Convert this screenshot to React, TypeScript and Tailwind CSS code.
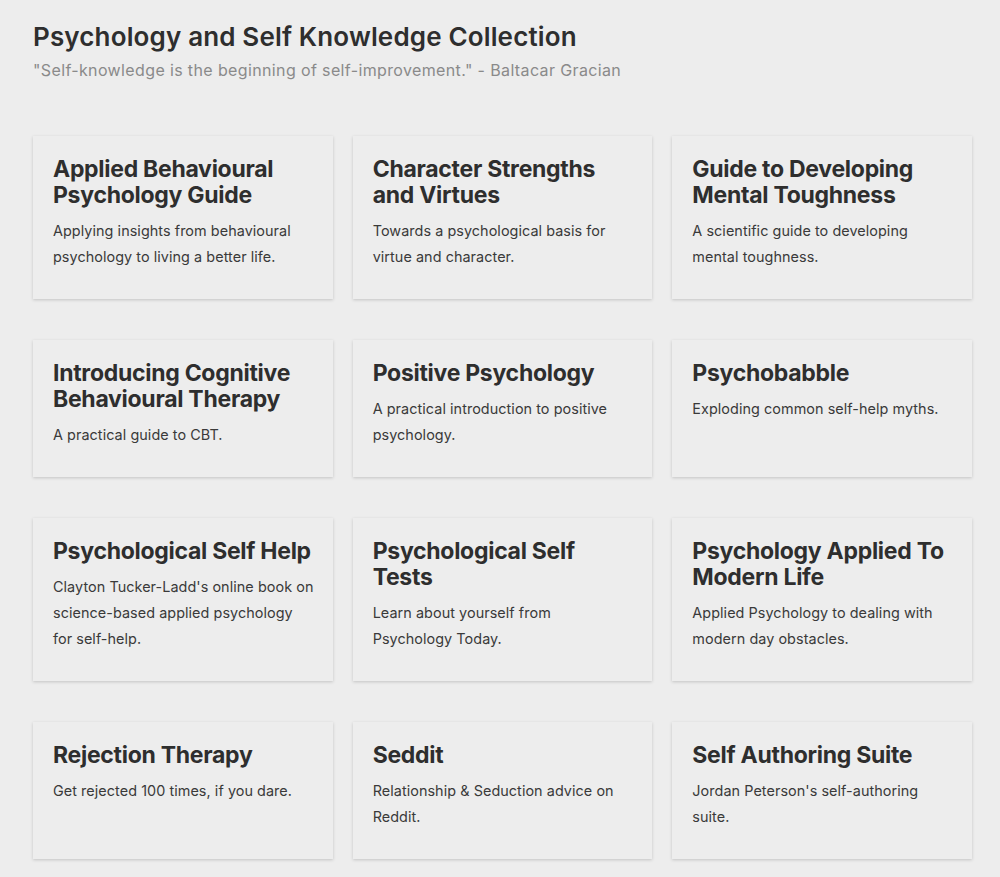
const items = [
  { title: 'Applied Behavioural Psychology Guide', desc: 'Applying insights from behavioural psychology to living a better life.' },
  { title: 'Character Strengths and Virtues', desc: 'Towards a psychological basis for virtue and character.' },
  { title: 'Guide to Developing Mental Toughness', desc: 'A scientific guide to developing mental toughness.' },
  { title: 'Introducing Cognitive Behavioural Therapy', desc: 'A practical guide to CBT.' },
  { title: 'Positive Psychology', desc: 'A practical introduction to positive psychology.' },
  { title: 'Psychobabble', desc: 'Exploding common self-help myths.' },
  { title: 'Psychological Self Help', desc: "Clayton Tucker-Ladd's online book on science-based applied psychology for self-help." },
  { title: 'Psychological Self Tests', desc: 'Learn about yourself from Psychology Today.' },
  { title: 'Psychology Applied To Modern Life', desc: 'Applied Psychology to dealing with modern day obstacles.' },
  { title: 'Rejection Therapy', desc: 'Get rejected 100 times, if you dare.' },
  { title: 'Seddit', desc: 'Relationship & Seduction advice on Reddit.' },
  { title: 'Self Authoring Suite', desc: "Jordan Peterson's self-authoring suite." },
]

function Card({ title, desc }: { title: string; desc: string }) {
  return (
    <div className="bg-[#ededed] px-5 pt-5 pb-[29px] shadow-[0_1px_3px_rgba(0,0,0,0.18)]">
      <h2 className="text-[23px] font-bold leading-[26px] tracking-[-0.28px] text-[#2e2e2e]">{title}</h2>
      <p className="-mr-px mt-[10px] text-[14.4px] leading-[26px] tracking-[0.06px] text-[#3a3a3a]">{desc}</p>
    </div>
  )
}

export default function App() {
  return (
    <div className="min-h-screen bg-[#ededed] font-['Inter',sans-serif]">
      <div className="ml-[33px] w-[939px] pt-[20px] pb-10">
        <h1 className="text-[26px] font-semibold leading-[34px] tracking-[0.15px] text-[#2e2e2e]">
          Psychology and Self Knowledge Collection
        </h1>
        <p className="mt-[4px] text-[16px] leading-[24px] tracking-[0.37px] text-[#8a8a8a]">
          "Self-knowledge is the beginning of self-improvement." - Baltacar Gracian
        </p>
        <div className="mt-[54px] grid grid-cols-3 gap-x-5 gap-y-[41px]">
          {items.map((it) => (
            <Card key={it.title} title={it.title} desc={it.desc} />
          ))}
        </div>
      </div>
    </div>
  )
}
